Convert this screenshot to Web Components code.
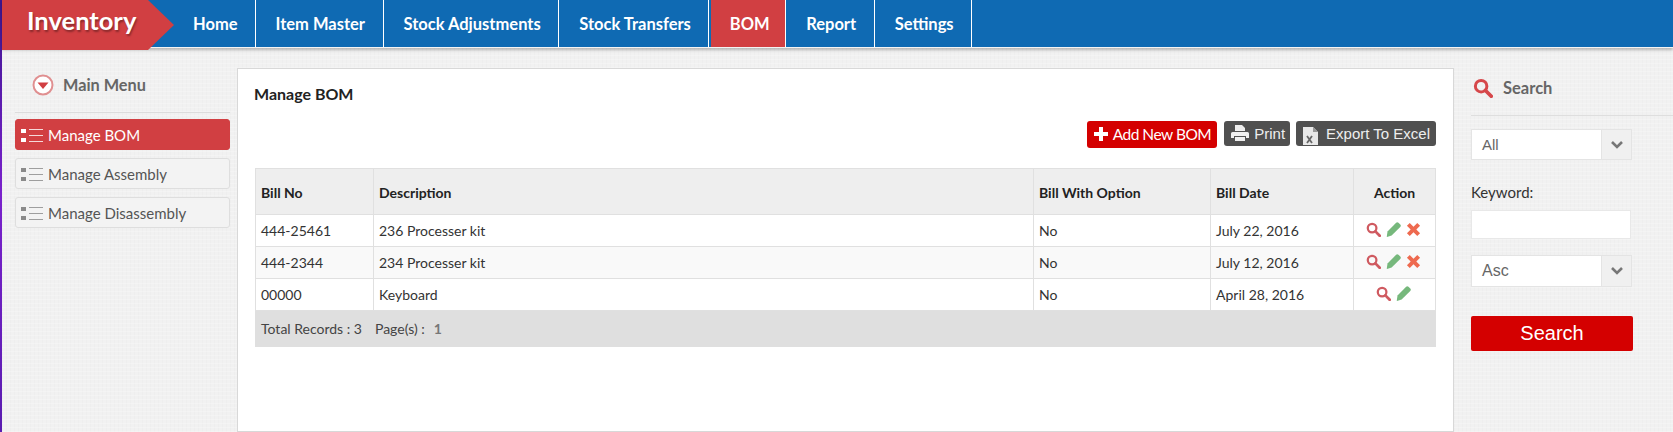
<!DOCTYPE html>
<html lang="en">
<head>
<meta charset="utf-8">
<title>Manage BOM</title>
<style>
  html, body { margin: 0; height: 100%; overflow: hidden; }
  body { display: flex; font-family: Lato, "Liberation Sans", sans-serif; background: #f1f1f1; }
  .strip { flex: 0 0 2px; background: linear-gradient(#3d1690, #7a22cc 45%, #5a1cb0); }
  inv-app { flex: 1; min-width: 0; }
</style>
</head>
<body>
<div class="strip"></div>
<inv-app>
  <inv-header slot="header">
    <inv-nav-item>Home</inv-nav-item>
    <inv-nav-item>Item Master</inv-nav-item>
    <inv-nav-item>Stock Adjustments</inv-nav-item>
    <inv-nav-item>Stock Transfers</inv-nav-item>
    <inv-nav-item active>BOM</inv-nav-item>
    <inv-nav-item>Report</inv-nav-item>
    <inv-nav-item>Settings</inv-nav-item>
  </inv-header>
  <inv-sidebar slot="left">
    <inv-menu-item active>Manage BOM</inv-menu-item>
    <inv-menu-item>Manage Assembly</inv-menu-item>
    <inv-menu-item>Manage Disassembly</inv-menu-item>
  </inv-sidebar>
  <inv-panel slot="main" heading="Manage BOM">
    <inv-button slot="actions" kind="add" icon="plus">Add New BOM</inv-button>
    <inv-button slot="actions" kind="dark" icon="print">Print</inv-button>
    <inv-button slot="actions" kind="dark" icon="excel">Export To Excel</inv-button>
    <bom-table></bom-table>
  </inv-panel>
  <search-panel slot="right"></search-panel>
</inv-app>

<script>
(function() {
    'use strict';

    var ICONS = {
        search: '<circle cx="6.500" cy="6.500" r="4.600" fill="none" stroke="currentColor" stroke-width="2.400"/><path d="M10 10l4.600 4.600" stroke="currentColor" stroke-width="3" stroke-linecap="round"/>',
        pencil: '<path d="M10.800.8a1.800 1.800 0 0 1 2.500 0l1.900 1.900a1.800 1.800 0 0 1 0 2.500L6 14.400 1 16l-.2-.2L1.600 10.200z" fill="currentColor"/>',
        cross: '<path d="M1 4l3-3 4 4 4-4 3 3-4 4 4 4-3 3-4-4-4 4-3-3 4-4z" fill="currentColor"/>',
        plus: '<path d="M6 1h4v5h5v4h-5v5H6v-5H1V6h5z" fill="currentColor"/>',
        print: '<path d="M5 1h7l3 3v3H5z" fill="currentColor"/><path d="M2.500 8h15A1.500 1.500 0 0 1 19 9.500V14h-3v-2H4v2H1V9.500A1.500 1.500 0 0 1 2.500 8z" fill="currentColor"/><path d="M5 13h10v4H5z" fill="currentColor"/>',
        excel: '<path d="M1 0h10l5 5v13H1z" fill="#e8e8e8"/><path d="M11 0l5 5h-5z" fill="#999"/><path d="M5 9l5 7M10 9l-5 7" stroke="#666" stroke-width="1.800"/>'
    };

    function icon(name, size, box) {
        return '<svg width="' + size + '" height="' + size + '" viewBox="0 0 ' + (box || 16) + ' ' + (box || 16) + '" aria-hidden="true">' + ICONS[name] + '</svg>';
    }

    function define(name, html, setup) {
        var tpl = document.createElement('template');
        tpl.innerHTML = html;
        customElements.define(name, class extends HTMLElement {
            constructor() {
                super();
                this.attachShadow({ mode: 'open' });
                this.shadowRoot.appendChild(tpl.content.cloneNode(true));
            }
            connectedCallback() {
                if (setup) setup(this, this.shadowRoot);
            }
        });
    }

    define('inv-app', [
        '<style>',
        '  :host { display: grid; grid-template-columns: 235px 1217px 1fr; grid-template-rows: 47px 1fr; height: 100vh;',
        '    background-color: #f1f1f1;',
        '    background-image: repeating-linear-gradient(0deg, rgba(255,255,255,.22) 0 1px, transparent 1px 4px), repeating-linear-gradient(90deg, rgba(0,0,0,.01) 0 1px, transparent 1px 4px); }',
        '  .top { grid-column: 1 / -1; }',
        '</style>',
        '<div class="top"><slot name="header"></slot></div>',
        '<slot name="left"></slot>',
        '<slot name="main"></slot>',
        '<slot name="right"></slot>'
    ].join(''));

    define('inv-header', [
        '<style>',
        '  :host { display: flex; height: 47px; background: #0f6ab3; border-bottom: 1px solid #f4f4f4; box-shadow: 0 2px 3px rgba(0,0,0,.25); box-sizing: content-box; position: relative; z-index: 2; }',
        '  .brand { flex: 0 0 172px; height: 50px; background: #d13f42; color: #fff; font: 700 25.500px/41px Lato, sans-serif; padding-left: 25px; box-sizing: border-box;',
        '    clip-path: polygon(0 0, 146px 0, 100% 50%, 146px 100%, 0 100%); text-shadow: 1px 2px 2px rgba(0,0,0,.35); }',
        '  nav { display: flex; }',
        '</style>',
        '<div class="brand">Inventory</div>',
        '<nav><slot></slot></nav>'
    ].join(''));

    define('inv-nav-item', [
        '<style>',
        '  :host { display: block; height: 47px; border-right: 1px solid #fff; color: #fff; font: 700 16.500px/48px Lato, sans-serif; padding: 0 17.500px 0 20px; white-space: nowrap; }',
        '  :host(:first-child) { padding: 0 17px 0 19px; }',
        '  :host([active]) { background: #d13f42; margin-left: 2px; padding: 0 15.500px 0 18.500px; }',
        '</style>',
        '<slot></slot>'
    ].join(''));

    define('inv-sidebar', [
        '<style>',
        '  :host { display: block; padding: 0 7px 0 13px; }',
        '  .head { display: flex; align-items: center; height: 66px; padding-top: 10px; box-sizing: border-box; border-bottom: 1px solid #dcdcdc; margin-bottom: 6px; padding-left: 17px; gap: 9px; color: #666; font: 700 16.300px Lato, sans-serif; }',
        '  .list { display: flex; flex-direction: column; gap: 8px; }',
        '</style>',
        '<div class="head">',
        '  <svg width="22" height="22" viewBox="0 0 22 22" aria-hidden="true"><circle cx="11" cy="11" r="9.500" fill="#fff" stroke="#e08f90" stroke-width="2"/><path d="M5.500 8.500h11L11 15z" fill="#d13f42"/></svg>',
        '  <span>Main Menu</span>',
        '</div>',
        '<div class="list"><slot></slot></div>'
    ].join(''));

    define('inv-menu-item', [
        '<style>',
        '  :host { display: flex; align-items: center; height: 31px; box-sizing: border-box; padding-left: 4px; gap: 4px; border: 1px solid #dedede; border-radius: 3px; background: #f3f3f3; color: #555; font: 15px Lato, sans-serif; white-space: nowrap; }',
        '  :host([active]) { background: #d13f42; border-color: #d13f42; color: #fff; }',
        '  svg { flex: none; color: #8a8a8a; }',
        '  :host([active]) svg { color: #fff; }',
        '</style>',
        '<svg width="24" height="16" viewBox="0 0 24 16" aria-hidden="true">',
        '  <rect x="1" y="2" width="5" height="4" fill="currentColor"/><rect x="1" y="11" width="5" height="4" fill="currentColor"/>',
        '  <path d="M9 2.500h14M9 8.500h14M9 14.500h14" stroke="currentColor" stroke-width="1" opacity=".8"/>',
        '</svg>',
        '<slot></slot>'
    ].join(''));

    define('inv-panel', [
        '<style>',
        '  :host { display: block; margin-top: 21px; background: #fff; border: 1px solid #d8d8d8; padding: 0 17px 0 17px; box-sizing: border-box; color: #222; }',
        '  h2 { margin: 0 0 0 -1px; font: 700 16px/50px Lato, sans-serif; height: 52px; }',
        '  .actions { display: flex; justify-content: flex-end; align-items: flex-start; gap: 6px; height: 47px; }',
        '</style>',
        '<h2></h2>',
        '<div class="actions"><slot name="actions"></slot></div>',
        '<slot></slot>'
    ].join(''), function(el, root) {
        root.querySelector('h2').textContent = el.getAttribute('heading');
    });

    define('inv-button', [
        '<style>',
        '  :host { display: inline-flex; align-items: center; height: 25px; box-sizing: border-box; padding: 0 6px; gap: 4px; border-radius: 3px; background: #505050; color: #eee; font: 15px "Liberation Sans", sans-serif; white-space: nowrap; }',
        '  :host([icon="print"]) { padding-right: 5px; }',
        '  :host([kind="add"]) { height: 27px; padding-bottom: 2px; background: #d40000; color: #fff; font: 15.500px Lato, sans-serif; letter-spacing: -.5px; margin-right: 1px; }',
        '  svg { flex: none; }',
        '</style>',
        '<span id="ico"></span><slot></slot>'
    ].join(''), function(el, root) {
        var name = el.getAttribute('icon');
        var ico = root.getElementById('ico');
        ico.style.display = 'inline-flex';
        if (name === 'plus') ico.innerHTML = icon('plus', 16);
        if (name === 'print') ico.innerHTML = icon('print', 20, 20);
        if (name === 'excel') { ico.innerHTML = icon('excel', 18, 18); ico.style.marginRight = '2px'; ico.style.marginTop = '4px'; }
    });

    var ROWS = [
        ['444-25461', '236 Processer kit', 'No', 'July 22, 2016', true],
        ['444-2344', '234 Processer kit', 'No', 'July 12, 2016', true],
        ['00000', 'Keyboard', 'No', 'April 28, 2016', false]
    ];

    define('bom-table', [
        '<style>',
        '  :host { display: block; color: #333; font: 14px Lato, sans-serif; }',
        '  table { width: 1181px; border-collapse: collapse; table-layout: fixed; border: 1px solid #e2e2e2; }',
        '  th, td { box-sizing: border-box; border: 1px solid #e0e0e0; padding: 0 5px; text-align: left; }',
        '  th { height: 46px; background: #eee; color: #222; font-weight: 700; padding-top: 1px; }',
        '  td { height: 32px; }',
        '  tbody tr:nth-child(2) td { background: #f9f9f9; }',
        '  .act { text-align: center; }',
        '  td.act { white-space: nowrap; font-size: 0; padding: 0 2px 3px 0; }',
        '  td.act svg { margin: 0 2.500px; }',
        '  .s { color: #cf5a60; } .p { color: #76b87c; } .x { color: #ee6a4f; }',
        '  tfoot td { height: 36px; background: #dfdfdf; border-color: #dfdfdf; color: #444; }',
        '  tfoot span { margin-right: 13px; }',
        '  tfoot b { color: #777; margin-left: 9px; }',
        '</style>',
        '<table>',
        '  <colgroup><col style="width:118px"><col style="width:660px"><col style="width:177px"><col style="width:143px"><col></colgroup>',
        '  <thead><tr><th>Bill No</th><th>Description</th><th>Bill With Option</th><th>Bill Date</th><th class="act">Action</th></tr></thead>',
        '  <tbody></tbody>',
        '  <tfoot><tr><td colspan="5"><span>Total Records : 3</span>Page(s) :<b>1</b></td></tr></tfoot>',
        '</table>'
    ].join(''), function(el, root) {
        var tbody = root.querySelector('tbody');
        ROWS.forEach(function(r) {
            var tr = document.createElement('tr');
            var actions = '<span class="s">' + icon('search', 15) + '</span><span class="p">' + icon('pencil', 15) + '</span>';
            if (r[4]) actions += '<span class="x">' + icon('cross', 15) + '</span>';
            tr.innerHTML = '<td>' + r[0] + '</td><td>' + r[1] + '</td><td>' + r[2] + '</td><td>' + r[3] + '</td><td class="act">' + actions + '</td>';
            tbody.appendChild(tr);
        });
    });

    define('inv-select', [
        '<style>',
        '  :host { display: flex; width: 161px; box-sizing: border-box; border: 1px solid #e4e4e4; background: #fff; color: #666; font: 15px "Liberation Sans", sans-serif; }',
        '  .val { flex: 1; padding-left: 10px; display: flex; align-items: center; }',
        '  .arrow { flex: 0 0 29px; display: flex; align-items: center; justify-content: center; background: #f0f0f0; border-left: 1px solid #e4e4e4; }',
        '</style>',
        '<div class="val"><slot></slot></div>',
        '<div class="arrow"><svg width="14" height="10" viewBox="0 0 14 10" aria-hidden="true"><path d="M2 2l5 5 5-5" fill="none" stroke="#777" stroke-width="2.600"/></svg></div>'
    ].join(''));

    define('search-panel', [
        '<style>',
        '  :host { display: block; padding-left: 17px; color: #333; font: 15px Lato, sans-serif; }',
        '  .head { display: flex; align-items: center; gap: 10px; height: 69px; border-bottom: 1px solid #dedede; margin-bottom: 13px; color: #666; font-weight: 700; font-size: 16.500px; padding-top: 13px; box-sizing: border-box; }',
        '  .head svg { color: #d6474a; margin-left: 2px; }',
        '  inv-select.a { height: 31px; }',
        '  inv-select.b { height: 32px; font-size: 16px; margin-top: 16px; }',
        '  label { display: block; margin: 23px 0 9px; line-height: 18px; color: #333; }',
        '  input { display: block; width: 160px; height: 29px; box-sizing: border-box; border: 1px solid #e8e8e8; background: #fff; padding: 0; margin: 0; }',
        '  button { display: block; width: 162px; height: 35px; margin: 29px 0 0 0; border: 0; border-radius: 2px; background: #d40000; color: #fff; font: 20px "Liberation Sans", sans-serif; padding: 0; }',
        '</style>',
        '<div class="head"><span style="display:inline-flex">' + icon('search', 20) + '</span><span>Search</span></div>',
        '<inv-select class="a">All</inv-select>',
        '<label>Keyword:</label>',
        '<input type="text">',
        '<inv-select class="b">Asc</inv-select>',
        '<button type="button">Search</button>'
    ].join(''));
})();
</script>
</body>
</html>
